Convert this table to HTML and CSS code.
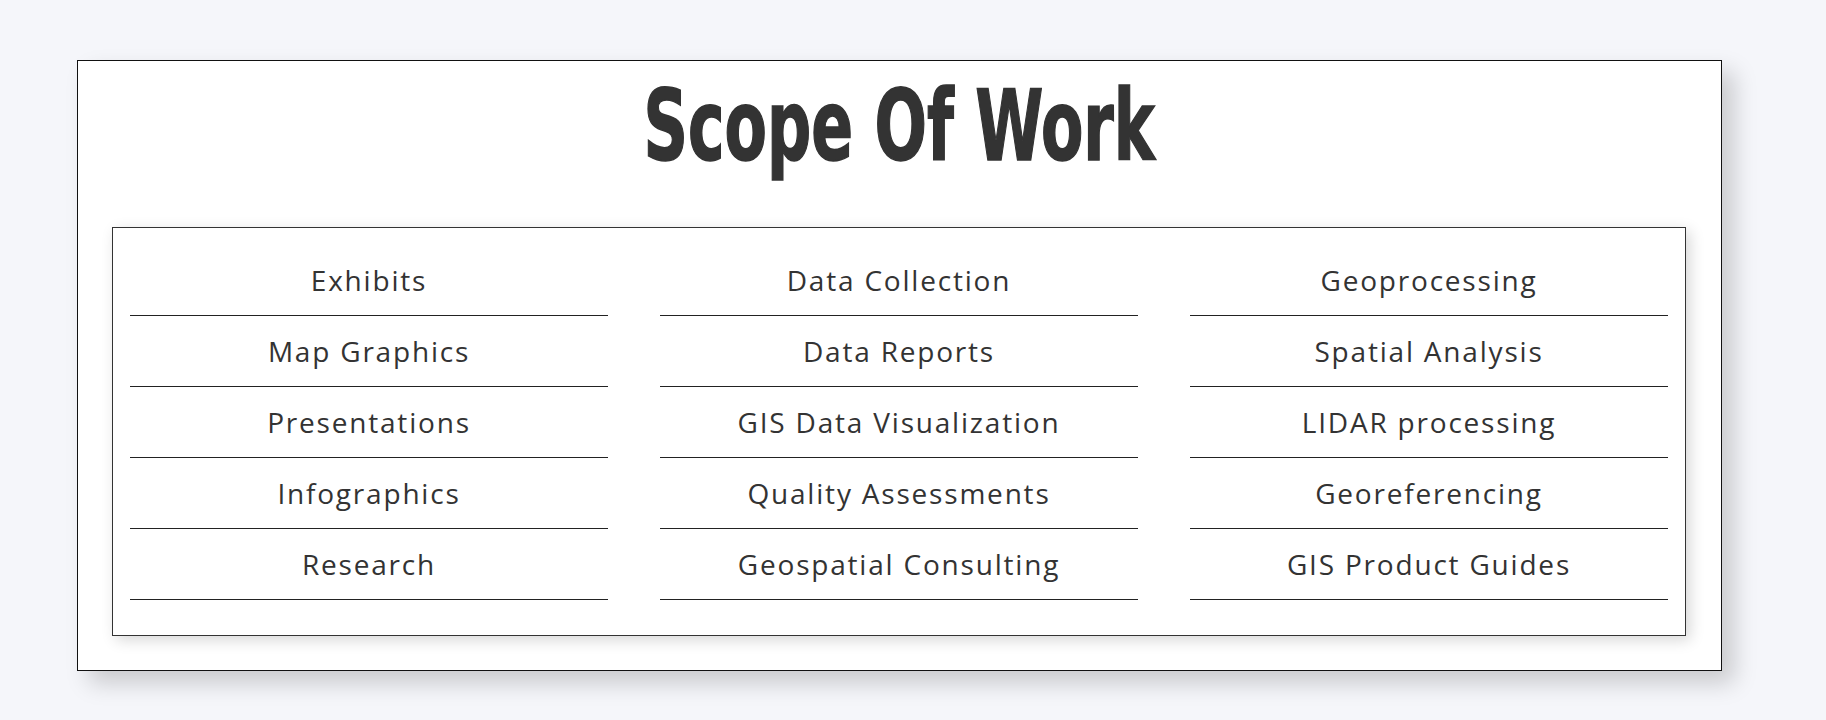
FILE: index.html
```html
<!DOCTYPE html>
<html>
<head>
<meta charset="utf-8">
<link rel="stylesheet" href="styles.css">
</head>
<body>
<section class="scope">
  <h1 class="title"><span class="title-text">Scope Of Work</span></h1>
  <div class="panel">
    <ul class="col">
      <li class="item">Exhibits</li>
      <li class="item">Map Graphics</li>
      <li class="item">Presentations</li>
      <li class="item">Infographics</li>
      <li class="item">Research</li>
    </ul>
    <ul class="col">
      <li class="item">Data Collection</li>
      <li class="item">Data Reports</li>
      <li class="item">GIS Data Visualization</li>
      <li class="item">Quality Assessments</li>
      <li class="item">Geospatial Consulting</li>
    </ul>
    <ul class="col">
      <li class="item">Geoprocessing</li>
      <li class="item">Spatial Analysis</li>
      <li class="item">LIDAR processing</li>
      <li class="item">Georeferencing</li>
      <li class="item">GIS Product Guides</li>
    </ul>
  </div>
</section>
</body>
</html>
```
FILE: styles.css
```css
html, body {
  margin: 0;
  padding: 0;
}
body {
  background: #f5f6fa;
  font-family: "Open Sans", "Noto Sans", sans-serif;
  color: #333;
  padding: 60px 104px 40px 77px;
}
.scope {
  background: #fff;
  border: 1px solid #111;
  box-shadow: 12px 12px 22px rgba(0, 0, 0, 0.18);
  padding: 0 35px 34px 34px;
}
.title {
  margin: 0;
  height: 166px;
  display: flex;
  justify-content: center;
  align-items: flex-start;
  box-sizing: border-box;
}
.title-text {
  display: inline-block;
  font-family: "DejaVu Sans Condensed", "DejaVu Sans", sans-serif;
  font-weight: bold;
  font-size: 98px;
  line-height: 1;
  color: #333;
  -webkit-text-stroke: 1.5px #333;
  transform: scaleX(0.7);
  margin-top: 16px;
}
.panel {
  border: 1px solid #333;
  box-shadow: 4px 4px 14px rgba(0, 0, 0, 0.16);
  padding: 17px 17px 35px 17px;
  display: grid;
  grid-template-columns: repeat(3, 1fr);
  column-gap: 52px;
}
.col {
  list-style: none;
  margin: 0;
  padding: 0;
}
.item {
  height: 70px;
  border-bottom: 1px solid #222;
  display: flex;
  align-items: center;
  justify-content: center;
  font-size: 28px;
  letter-spacing: 1.8px;
  color: #333;
}
```
